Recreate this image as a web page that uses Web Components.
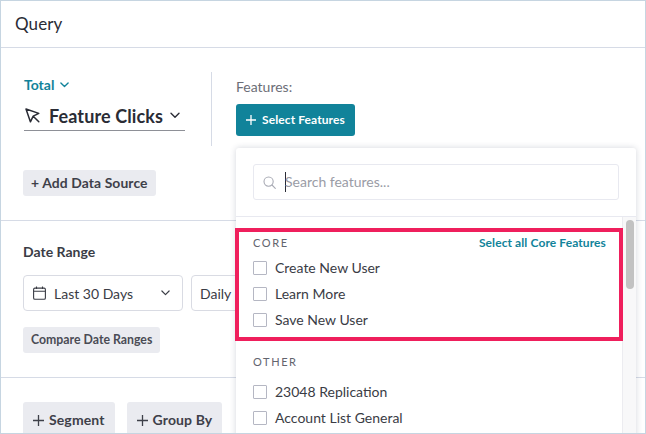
<!DOCTYPE html>
<html><head><meta charset="utf-8"><style>
html,body{margin:0;padding:0;background:#fff;overflow:hidden}
body{width:646px;height:434px;font-family:Lato,"Liberation Sans",sans-serif;color:#2a2c35}
</style></head><body>
<query-card>
  <query-section slot="body" style="height:172px">
    <div style="display:flex;padding:24px 0 0 23px;height:74px">
      <source-picker></source-picker>
      <feature-panel></feature-panel>
    </div>
    <soft-button style="margin-top:24px">+ Add Data Source</soft-button>
  </query-section>
  <query-section slot="body" style="height:157px" rule>
    <date-row></date-row>
  </query-section>
  <query-section slot="body" style="height:56px" rule>
    <div style="display:flex;gap:12px;padding:24px 0 0 22px">
      <big-button>Segment</big-button>
      <big-button>Group By</big-button>
    </div>
  </query-section>
  <feature-dropdown slot="over"></feature-dropdown>
</query-card>
<script>
const svgChevron=(w,c,sw)=>`<svg width="${w}" height="${Math.round(w*.65)}" viewBox="0 0 10 6.5" fill="none" stroke="${c}" stroke-width="${sw}" stroke-linecap="round" stroke-linejoin="round"><path d="M1 1l4 4 4-4"/></svg>`;
function def(name,html){customElements.define(name,class extends HTMLElement{constructor(){super();this.attachShadow({mode:'open'}).innerHTML=html}})}

def('query-card',`<style>
:host{display:block;position:relative;box-sizing:border-box;width:646px;height:434px;border:1px solid #c6d5e1;overflow:hidden;background:#fff}
header{height:47px;box-sizing:border-box;border-bottom:1px solid #d6dbe6;padding:11px 0 0 14px;font-size:17px;line-height:24px;color:#2a2c35;letter-spacing:.1px}
</style><header>Query</header><slot name="body"></slot><slot name="over"></slot>`);

def('query-section',`<style>
:host{display:block;box-sizing:border-box;position:relative}
:host([rule]){border-top:1px solid #d6dbe6}
</style><slot></slot>`);

def('source-picker',`<style>
:host{display:block;width:188px;box-sizing:border-box;border-right:1px solid #d6dbe6;height:74px}
.t{display:flex;align-items:center;gap:6px;color:#11839a;font-size:14px;font-weight:700;line-height:18px;margin-top:4px}
.f{display:flex;align-items:center;width:161px;height:30px;box-sizing:border-box;border-bottom:1px solid #8e9097;margin:7px 0 0 0;font-size:18px;font-weight:700;color:#2a2c35;white-space:nowrap}
.f svg.c{margin:0 9px 0 1px}
.f span{margin-right:7px;letter-spacing:.12px}
</style>
<div class="t">Total ${svgChevron(9,'#11839a',1.5)}</div>
<div class="f"><svg class="c" width="15" height="15" viewBox="0 0 15 15" fill="none" stroke="#2a2c35" stroke-width="1.5" stroke-linejoin="round" stroke-linecap="round"><path d="M1 1l4.4 12.8 2.8-5.6 5.6-2.8zM8.2 8.2l5.6 5.6"/></svg><span>Feature Clicks</span>${svgChevron(10,'#2a2c35',1.4)}</div>`);

def('feature-panel',`<style>
:host{display:block;margin-left:24px}
.l{font-size:14px;line-height:18px;color:#6c6e77;margin-top:6px}
button{all:unset;display:flex;align-items:center;box-sizing:border-box;width:119px;height:32px;margin-top:8px;background:#11839a;border-radius:3px;color:#fff;font:700 12px Lato,sans-serif;padding-left:10px;gap:6px;white-space:nowrap}
button span{margin-bottom:2px;letter-spacing:.1px}
</style><div class="l">Features:</div><button><svg width="10" height="10" viewBox="0 0 10 10" stroke="#fff" stroke-width="1.3"><path d="M5 0v10M0 5h10"/></svg><span>Select Features</span></button>`);

def('soft-button',`<style>
:host{display:inline-block;position:relative;margin-left:22px;height:26px;line-height:25px;padding:0 8px;background:#eaebf0;border-radius:3px;font-size:13.9px;font-weight:700;color:#3e4049;white-space:nowrap;letter-spacing:.1px}
</style><slot></slot>`);

def('date-row',`<style>
:host{display:block;padding:22px 0 0 22px}
h3{margin:0;font-size:14px;font-weight:700;line-height:18px;color:#3a3c45}
.r{display:flex;gap:8px;margin-top:14px}
.s{box-sizing:border-box;height:36px;border:1px solid #d9dbe3;border-radius:4px;background:#fff;display:flex;align-items:center;font-size:14px;color:#3a3c45;white-space:nowrap}
.a{width:160px;padding-left:9px}
.a span{margin-left:8px;flex:1}
.a svg:last-child{margin-right:12px}
.b{width:80px;padding-left:8px}
.x{display:inline-block;margin-top:16px;height:26px;line-height:26px;padding:0 8px;background:#eaebf0;border-radius:3px;font-size:12.3px;font-weight:700;color:#4a4c55;white-space:nowrap}
</style><h3>Date Range</h3>
<div class="r"><div class="s a"><svg width="13" height="14" viewBox="0 0 13 14" fill="none" stroke="#3a3c45" stroke-width="1.1"><rect x=".6" y="2.1" width="11.8" height="11.2" rx="1.3"/><path d="M.6 5.2h11.8M3.5.5v2.6M9.5.5v2.6"/></svg><span>Last 30 Days</span>${svgChevron(9,'#3a3c45',1.3)}</div><div class="s b">Daily</div></div>
<div class="x">Compare Date Ranges</div>`);

def('big-button',`<style>
:host{display:flex;align-items:center;gap:5px;box-sizing:border-box;height:36px;padding:0 10px;background:#eaebf0;border-radius:3px;font-size:14px;font-weight:700;color:#3e4049;white-space:nowrap}
span{margin-bottom:2px;letter-spacing:.12px}
</style><svg width="11" height="11" viewBox="0 0 11 11" stroke="#3e4049" stroke-width="1.3"><path d="M5.5 0v11M0 5.5h11"/></svg><span><slot></slot></span>`);

def('check-row',`<style>
:host{display:flex;align-items:center;height:26px;font-size:14px;color:#3a3c45;white-space:nowrap}
i{display:block;box-sizing:border-box;width:14px;height:14px;border:1px solid #b5b7c3;border-radius:1px;margin:2px 8px 0 0;background:#fff}
</style><i></i><slot></slot>`);

def('group-label',`<style>
:host{display:block;font-size:11px;line-height:14px;letter-spacing:1.6px;color:#62646e}
</style><slot></slot>`);

def('feature-dropdown',`<style>
:host{position:absolute;left:235px;top:147px;width:400px;height:300px;background:#fff;border-radius:3px;box-shadow:0 0 6px rgba(40,50,80,.2);display:block}
.search{height:69px;box-sizing:border-box;padding:16px 17px 0;border-bottom:1px solid #e8e9f0}
.box{height:36px;box-sizing:border-box;border:1px solid #e8e9f0;border-radius:3px;display:flex;align-items:center;padding-left:9px;color:#9a9ca6;font-size:14px;white-space:nowrap}
.box span:last-child{margin-bottom:2px}
.caret{width:1px;height:20px;background:#2a2c35;margin:0 -1px 0 9px}
.list{display:flex;height:231px}
.groups{width:386px;box-sizing:border-box;padding:0 17px}
.core{height:119px;padding-top:18px;box-sizing:border-box}
.head{display:flex;justify-content:space-between;align-items:center;margin-bottom:4px}
.head b{font-size:12px;color:#11839a;letter-spacing:.1px;margin-right:-1px}
.other{padding-top:19px}
.other group-label{margin-bottom:9px}
.bar{width:14px;background:#f8f8f9;border-left:1px solid #ececf0;box-sizing:border-box;padding:3px}
.bar div{width:8px;height:69px;background:#c2c2c2;border-radius:4px}
.mark{position:absolute;left:-1px;top:80px;width:388px;height:113px;box-sizing:border-box;border:4px solid #ef1f5c;pointer-events:none}
</style>
<div class="search"><div class="box"><svg width="13" height="13" viewBox="0 0 13 13" fill="none" stroke="#a8aab4" stroke-width="1.1"><circle cx="5.6" cy="5.6" r="4.6"/><path d="M9 9l3.3 3.3" stroke-linecap="round"/></svg><span class="caret"></span><span>Search features...</span></div></div>
<div class="list"><div class="groups">
<div class="core"><div class="head"><group-label>CORE</group-label><b>Select all Core Features</b></div>
<check-row>Create New User</check-row><check-row>Learn More</check-row><check-row>Save New User</check-row></div>
<div class="other"><group-label>OTHER</group-label><check-row>23048 Replication</check-row><check-row>Account List General</check-row></div>
</div><div class="bar"><div></div></div></div>
<div class="mark"></div>`);
</script>
</body></html>
